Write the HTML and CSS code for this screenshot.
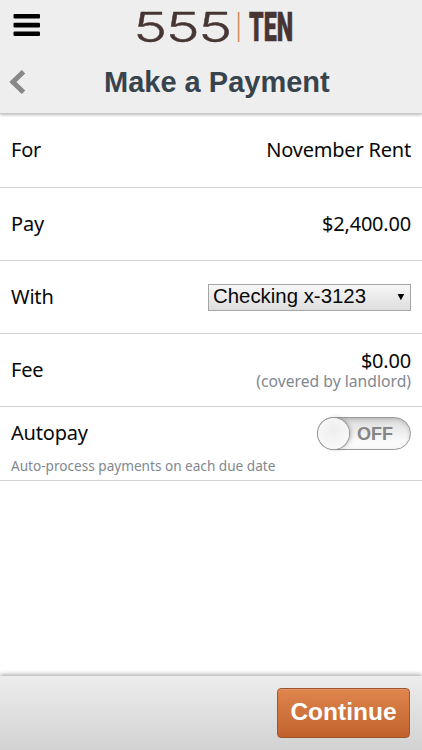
FILE: index.html
```
<!DOCTYPE html>
<html lang="en">
<head>
<meta charset="utf-8">
<title>Make a Payment</title>
<link rel="stylesheet" href="styles.css">
</head>
<body>
<header class="header">
  <div class="brand-bar">
    <svg class="menu" width="28" height="24" viewBox="0 0 28 24"><g><rect x="0.5" y="1" width="26.5" height="4.6" rx="1"/><rect x="0.5" y="9.8" width="26.5" height="4.6" rx="1"/><rect x="0.5" y="18.4" width="26.5" height="4.6" rx="1"/></g></svg>
    <svg class="logo" width="160" height="36" viewBox="0 0 160 36" aria-label="555 TEN">
      <text class="logo-number" transform="translate(-1.8 32.5) scale(1.4 1)" x="0 23.2 46.4">555</text>
      <path class="logo-rule" d="M103.6 3v30"/>
      <text class="logo-word" x="114" y="32" textLength="44" lengthAdjust="spacingAndGlyphs">TEN</text>
    </svg>
  </div>
  <div class="title-bar">
    <svg class="back" width="18" height="26" viewBox="0 0 18 26"><path d="M15.5 2.8L4.9 13l10.6 10.2"/></svg>
    <h1 class="title">Make a Payment</h1>
  </div>
</header>
<main class="rows">
  <div class="row"><span>For</span><span>November Rent</span></div>
  <div class="row"><span>Pay</span><span>$2,400.00</span></div>
  <div class="row"><span>With</span>
    <div class="select"><span>Checking x-3123</span><svg width="8" height="8" viewBox="0 0 8 8"><path d="M.6 1h6.6L3.9 7.3z"/></svg></div>
  </div>
  <div class="row"><span>Fee</span><div class="fee"><span>$0.00</span><span class="fee-note">(covered by landlord)</span></div></div>
  <div class="row autopay">
    <div class="autopay-line"><span>Autopay</span><div class="switch"><span class="knob"></span><span class="state">OFF</span></div></div>
    <span class="hint">Auto-process payments on each due date</span>
  </div>
</main>
<footer class="footer"><button class="continue" type="button">Continue</button></footer>
</body>
</html>
```
FILE: styles.css
```
* { box-sizing: border-box; }
body {
  margin: 0;
  height: 750px;
  display: flex;
  flex-direction: column;
  overflow: hidden;
  background: #fff;
  color: #080808;
  font: 20px/26px "Noto Sans", sans-serif;
}
.header {
  height: 114px;
  flex: none;
  background: #eee;
  border-bottom: 1px solid #c8cac9;
  box-shadow: 0 1px 3px rgba(0, 0, 0, .28);
}
.brand-bar { display: flex; height: 52px; padding: 9px 0 0 13px; }
.menu { margin-top: 4px; }
.logo { margin-left: 94px; overflow: visible; }
.logo-number { font: 300 41px Inter, sans-serif; fill: #463533; stroke: #463533; stroke-width: .4px; }
.logo-word { font: 900 41px Roboto, sans-serif; fill: #463533; stroke: #463533; stroke-width: .6px; }
.logo-rule { stroke: #d78a5d; stroke-width: 1.6px; }
.title-bar { display: flex; align-items: center; height: 60px; padding-left: 8px; }
.back { fill: none; stroke: #888; stroke-width: 5px; }
.title {
  margin: 0 0 0 78px;
  font: bold 29px/34px "Liberation Sans", Arial, sans-serif;
  color: #37434d;
  white-space: nowrap;
}
.rows { flex: 1; padding-top: .3px; }
.row {
  height: 73.3px;
  display: flex;
  align-items: center;
  justify-content: space-between;
  padding: 0 11px;
  border-bottom: 1px solid #d2d2d2;
  letter-spacing: -.2px;
  white-space: nowrap;
}
.select {
  width: 203px;
  height: 27px;
  display: flex;
  align-items: center;
  justify-content: space-between;
  padding: 0 5px 1px 4px;
  border: 1px solid #a5a5a5;
  background: linear-gradient(#f7f7f7, #dedede);
  font: 20.4px/23px "Liberation Sans", Arial, sans-serif;
  letter-spacing: 0;
}
.fee { display: flex; flex-direction: column; align-items: flex-end; padding-top: 2px; }
.fee span { line-height: 20px; }
.fee .fee-note { font-size: 15.7px; letter-spacing: 0; color: #818890; }
.autopay { flex-direction: column; align-items: stretch; justify-content: flex-start; padding-top: 9px; }
.autopay-line { display: flex; height: 34px; align-items: center; justify-content: space-between; }
.hint { margin-top: 6px; font-size: 13.6px; line-height: 20px; letter-spacing: 0; color: #818890; }
.switch {
  width: 94px;
  height: 33px;
  display: flex;
  align-items: center;
  border: 1px solid #999;
  border-radius: 17px;
  background: linear-gradient(#dcdcdc, #fafafa 75%);
  box-shadow: inset 0 2px 4px rgba(0, 0, 0, .15);
}
.knob {
  width: 31px;
  height: 31px;
  border-radius: 50%;
  background: radial-gradient(circle at 50% 40%, #eee, #f7f7f7 65%, #fff);
  box-shadow: 0 0 0 1px #999, 2px 0 4px rgba(0, 0, 0, .25);
}
.state { margin-left: 8px; padding-top: 2px; font: bold 18px/22px "Liberation Sans", Arial, sans-serif; letter-spacing: 0; color: #858585; }
.footer {
  height: 74px;
  flex: none;
  display: flex;
  justify-content: flex-end;
  padding: 12px 12px 0 0;
  background: linear-gradient(#ededed, #d2d2d2);
  box-shadow: 0 -1px 5px rgba(0, 0, 0, .4);
}
.continue {
  width: 133px;
  height: 50px;
  padding: 0 0 2px;
  border: 1px solid #a2552c;
  border-radius: 4px;
  background: linear-gradient(#df854e, #c1622d);
  box-shadow: inset 0 1px 0 rgba(255, 255, 255, .15);
  color: #fff;
  font: bold 24.5px/28px "Liberation Sans", Arial, sans-serif;
}
```
